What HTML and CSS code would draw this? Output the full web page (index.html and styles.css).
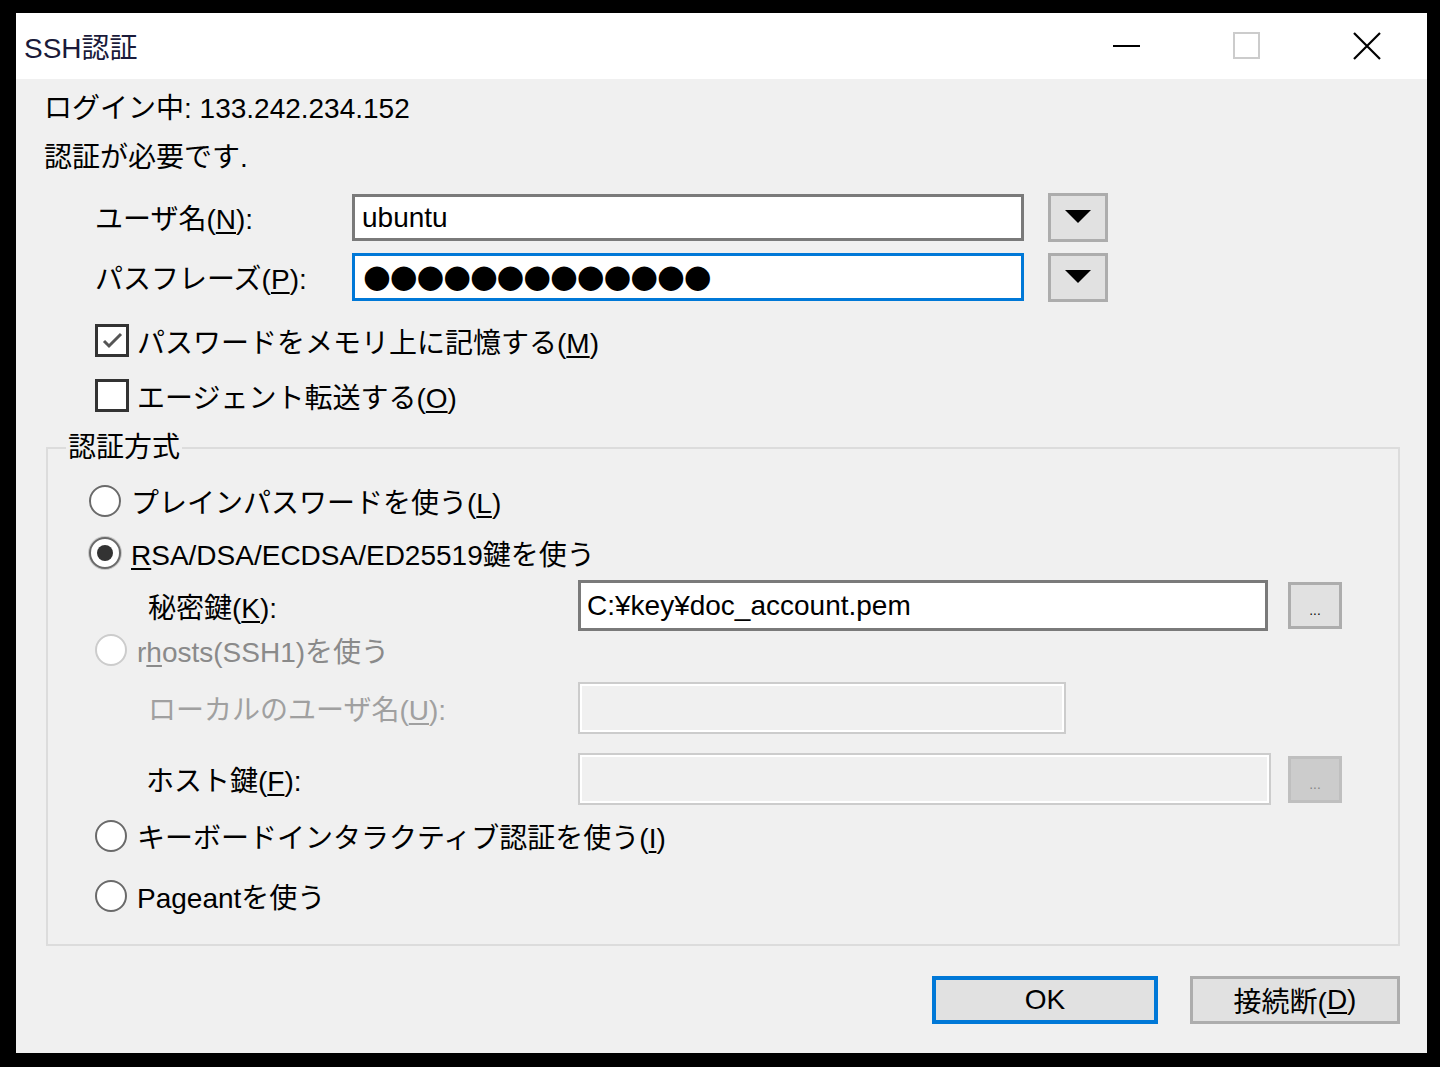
FILE: index.html
```html
<!DOCTYPE html>
<html lang="ja">
<head>
  <meta charset="UTF-8" />
  <title>SSH認証</title>
  <link rel="stylesheet" href="styles.css">
</head>
<body>
  <div class="window">
    <div class="titlebar">
      <span class="title">SSH認証</span>
      <div class="caption-buttons">
        <span class="cap-btn">
          <svg width="28" height="4" viewBox="0 0 28 4"><rect x="0" y="1" width="27" height="2" fill="#000"/></svg>
        </span>
        <span class="cap-btn">
          <svg width="28" height="28" viewBox="0 0 28 28"><rect x="1" y="1" width="25" height="25" fill="none" stroke="#cccccc" stroke-width="2"/></svg>
        </span>
        <span class="cap-btn">
          <svg width="28" height="28" viewBox="0 0 28 28"><path d="M1 1 L27 27 M27 1 L1 27" stroke="#000" stroke-width="2.2" fill="none"/></svg>
        </span>
      </div>
    </div>

    <div class="content">
      <p class="info">ログイン中: 133.242.234.152</p>
      <p class="info">認証が必要です.</p>

      <!-- ユーザ名 / パスフレーズ -->
      <div class="field-row">
        <span class="field-label">ユーザ名(<u>N</u>):</span>
        <div class="textbox">ubuntu</div>
        <span class="drop-btn">
          <svg width="26" height="14" viewBox="0 0 26 14"><polygon points="0,0 26,0 13,13" fill="#000"/></svg>
        </span>
      </div>
      <div class="field-row">
        <span class="field-label">パスフレーズ(<u>P</u>):</span>
        <div class="textbox focused"><span class="dots">●●●●●●●●●●●●●</span></div>
        <span class="drop-btn">
          <svg width="26" height="14" viewBox="0 0 26 14"><polygon points="0,0 26,0 13,13" fill="#000"/></svg>
        </span>
      </div>

      <div class="check-row first">
        <span class="checkbox">
          <svg width="27" height="27" viewBox="0 0 27 27"><polyline points="5,14 10,19 22,7" fill="none" stroke="#555" stroke-width="3"/></svg>
        </span>
        <span>パスワードをメモリ上に記憶する(<u>M</u>)</span>
      </div>
      <div class="check-row">
        <span class="checkbox"></span>
        <span>エージェント転送する(<u>O</u>)</span>
      </div>

      <!-- 認証方式 -->
      <fieldset class="group">
        <legend>認証方式</legend>

        <div class="radio-row plain">
          <span class="radio"></span>
          <span>プレインパスワードを使う(<u>L</u>)</span>
        </div>
        <div class="radio-row rsa">
          <span class="radio checked"><span class="radio-dot"></span></span>
          <span><u>R</u>SA/DSA/ECDSA/ED25519鍵を使う</span>
        </div>
        <div class="sub-row key-row">
          <span class="sub-label">秘密鍵(<u>K</u>):</span>
          <div class="textbox path">C:¥key¥doc_account.pem</div>
          <span class="browse-btn">...</span>
        </div>
        <div class="radio-row rhosts disabled">
          <span class="radio"></span>
          <span>r<u>h</u>osts(SSH1)を使う</span>
        </div>
        <div class="sub-row local-row">
          <span class="sub-label disabled">ローカルのユーザ名(<u>U</u>):</span>
          <div class="textbox off local"></div>
        </div>
        <div class="sub-row host-row">
          <span class="sub-label host">ホスト鍵(<u>F</u>):</span>
          <div class="textbox off path"></div>
          <span class="browse-btn off">...</span>
        </div>
        <div class="radio-row kbd">
          <span class="radio"></span>
          <span>キーボードインタラクティブ認証を使う(<u>I</u>)</span>
        </div>
        <div class="radio-row pageant">
          <span class="radio"></span>
          <span>Pageantを使う</span>
        </div>
      </fieldset>

      <div class="dialog-buttons">
        <span class="btn default">OK</span>
        <span class="btn cancel">接続断(<u>D</u>)</span>
      </div>
    </div>
  </div>
</body>
</html>
```

FILE: styles.css
```css
body {
  margin: 0;
  background: #000;
  font-family: "Liberation Sans", "Noto Sans CJK JP", sans-serif;
  font-size: 28px;
  color: #000;
}

u {
  text-underline-offset: 3px;
  text-decoration-thickness: 2px;
}

.window {
  margin: 13px 0 0 16px;
  width: 1411px;
  height: 1040px;
  background: #f0f0f0;
}

.titlebar {
  height: 66px;
  background: #fff;
  display: flex;
  align-items: center;
}

.title {
  padding-left: 8px;
  color: #1a1a3a;
}

.caption-buttons {
  margin-left: auto;
  display: flex;
  height: 100%;
}

.cap-btn {
  width: 120px;
  display: flex;
  align-items: center;
  justify-content: center;
}

.content {
  padding: 5px 27px 0 28px;
}

.info {
  margin: 0;
  height: 49px;
  line-height: 49px;
}

/* ユーザ名・パスフレーズ */
.field-row {
  display: flex;
  align-items: center;
  height: 50px;
  margin: 10px 0 0 51px;
}

.field-label {
  width: 257px;
}

.textbox {
  box-sizing: border-box;
  width: 672px;
  height: 47px;
  background: #fff;
  border: 3px solid #7a7a7a;
  padding: 0 7px;
  line-height: 41px;
  white-space: nowrap;
  overflow: hidden;
}

.textbox.focused {
  height: 48px;
  border-color: #0078d7;
  padding-left: 8px;
}

.dots {
  font-family: "DejaVu Sans", sans-serif;
  font-size: 32px;
  letter-spacing: -1.2px;
  line-height: 40px;
}

.drop-btn {
  box-sizing: border-box;
  margin-left: 24px;
  width: 60px;
  height: 49px;
  background: #e1e1e1;
  border: 3px solid #adadad;
  display: flex;
  align-items: center;
  justify-content: center;
}

/* チェックボックス */
.check-row {
  display: flex;
  align-items: center;
  height: 55px;
  margin-left: 51px;
}

.check-row.first {
  margin-top: 11px;
}

.checkbox {
  box-sizing: border-box;
  width: 34px;
  height: 33px;
  background: #fff;
  border: 3px solid #333;
  margin-right: 8px;
  display: flex;
  align-items: center;
  justify-content: center;
}

/* 認証方式 */
.group {
  margin: 7px 0 0 2px;
  width: 1354px;
  box-sizing: border-box;
  border: 2px solid #dcdcdc;
  padding: 0 0 22px 0;
}

.group legend {
  margin-left: 18px;
  padding: 0 2px;
  line-height: 36px;
}

.radio-row {
  display: flex;
  align-items: center;
  height: 52px;
  margin-left: 47px;
}

.radio-row.plain {
  margin-left: 41px;
  margin-top: 9px;
}

.radio-row.rsa {
  margin-left: 41px;
}

.radio {
  box-sizing: border-box;
  width: 32px;
  height: 32px;
  border-radius: 50%;
  border: 2px solid #6a6a6a;
  background: #fff;
  margin-right: 10px;
  display: flex;
  align-items: center;
  justify-content: center;
}

.radio.checked {
  box-shadow: 0 0 0 1px #c8c8c8;
}

.radio-dot {
  width: 16px;
  height: 16px;
  border-radius: 50%;
  background: #333;
}

.radio-row.rhosts {
  height: 36px;
  margin-top: 1px;
}

.radio-row.disabled {
  color: #8a8a8a;
}

.radio-row.disabled .radio {
  border-color: #cccccc;
}

.radio-row.kbd {
  margin-top: 5px;
}

.radio-row.pageant {
  margin-top: 8px;
}

.sub-row {
  display: flex;
  align-items: center;
  height: 52px;
  margin-left: 100px;
}

.sub-label {
  width: 430px;
}

.sub-label.host {
  width: 432px;
  margin-left: -2px;
}

.sub-label.disabled {
  color: #a0a0a0;
}

.key-row {
  height: 51px;
  margin-top: 1px;
}

.local-row {
  margin-top: 14px;
}

.host-row {
  margin-top: 19px;
}

.textbox.path {
  width: 690px;
  height: 51px;
  line-height: 45px;
  padding: 0 6px;
}

.host-row .textbox.path {
  width: 693px;
}

.textbox.local {
  width: 488px;
}

.textbox.off {
  height: 52px;
  background: #f0f0f0;
  border: 2px solid #cccccc;
  box-shadow: inset 0 0 0 2px #fff;
}

.browse-btn {
  box-sizing: border-box;
  margin-left: 20px;
  width: 54px;
  height: 47px;
  background: #e1e1e1;
  border: 3px solid #adadad;
  font-family: "DejaVu Sans", sans-serif;
  font-size: 12px;
  display: flex;
  align-items: flex-end;
  justify-content: center;
  padding-bottom: 8px;
}

.host-row .browse-btn {
  margin-left: 17px;
}

.browse-btn.off {
  background: #cccccc;
  border-color: #bfbfbf;
  color: #838383;
}

/* OK / 接続断 */
.dialog-buttons {
  display: flex;
  justify-content: flex-end;
  gap: 32px;
  margin-top: 30px;
}

.btn {
  box-sizing: border-box;
  height: 48px;
  background: #e1e1e1;
  border: 3px solid #adadad;
  display: flex;
  align-items: center;
  justify-content: center;
}

.btn.default {
  width: 226px;
  border: 4px solid #0078d7;
}

.btn.cancel {
  width: 210px;
}
```
